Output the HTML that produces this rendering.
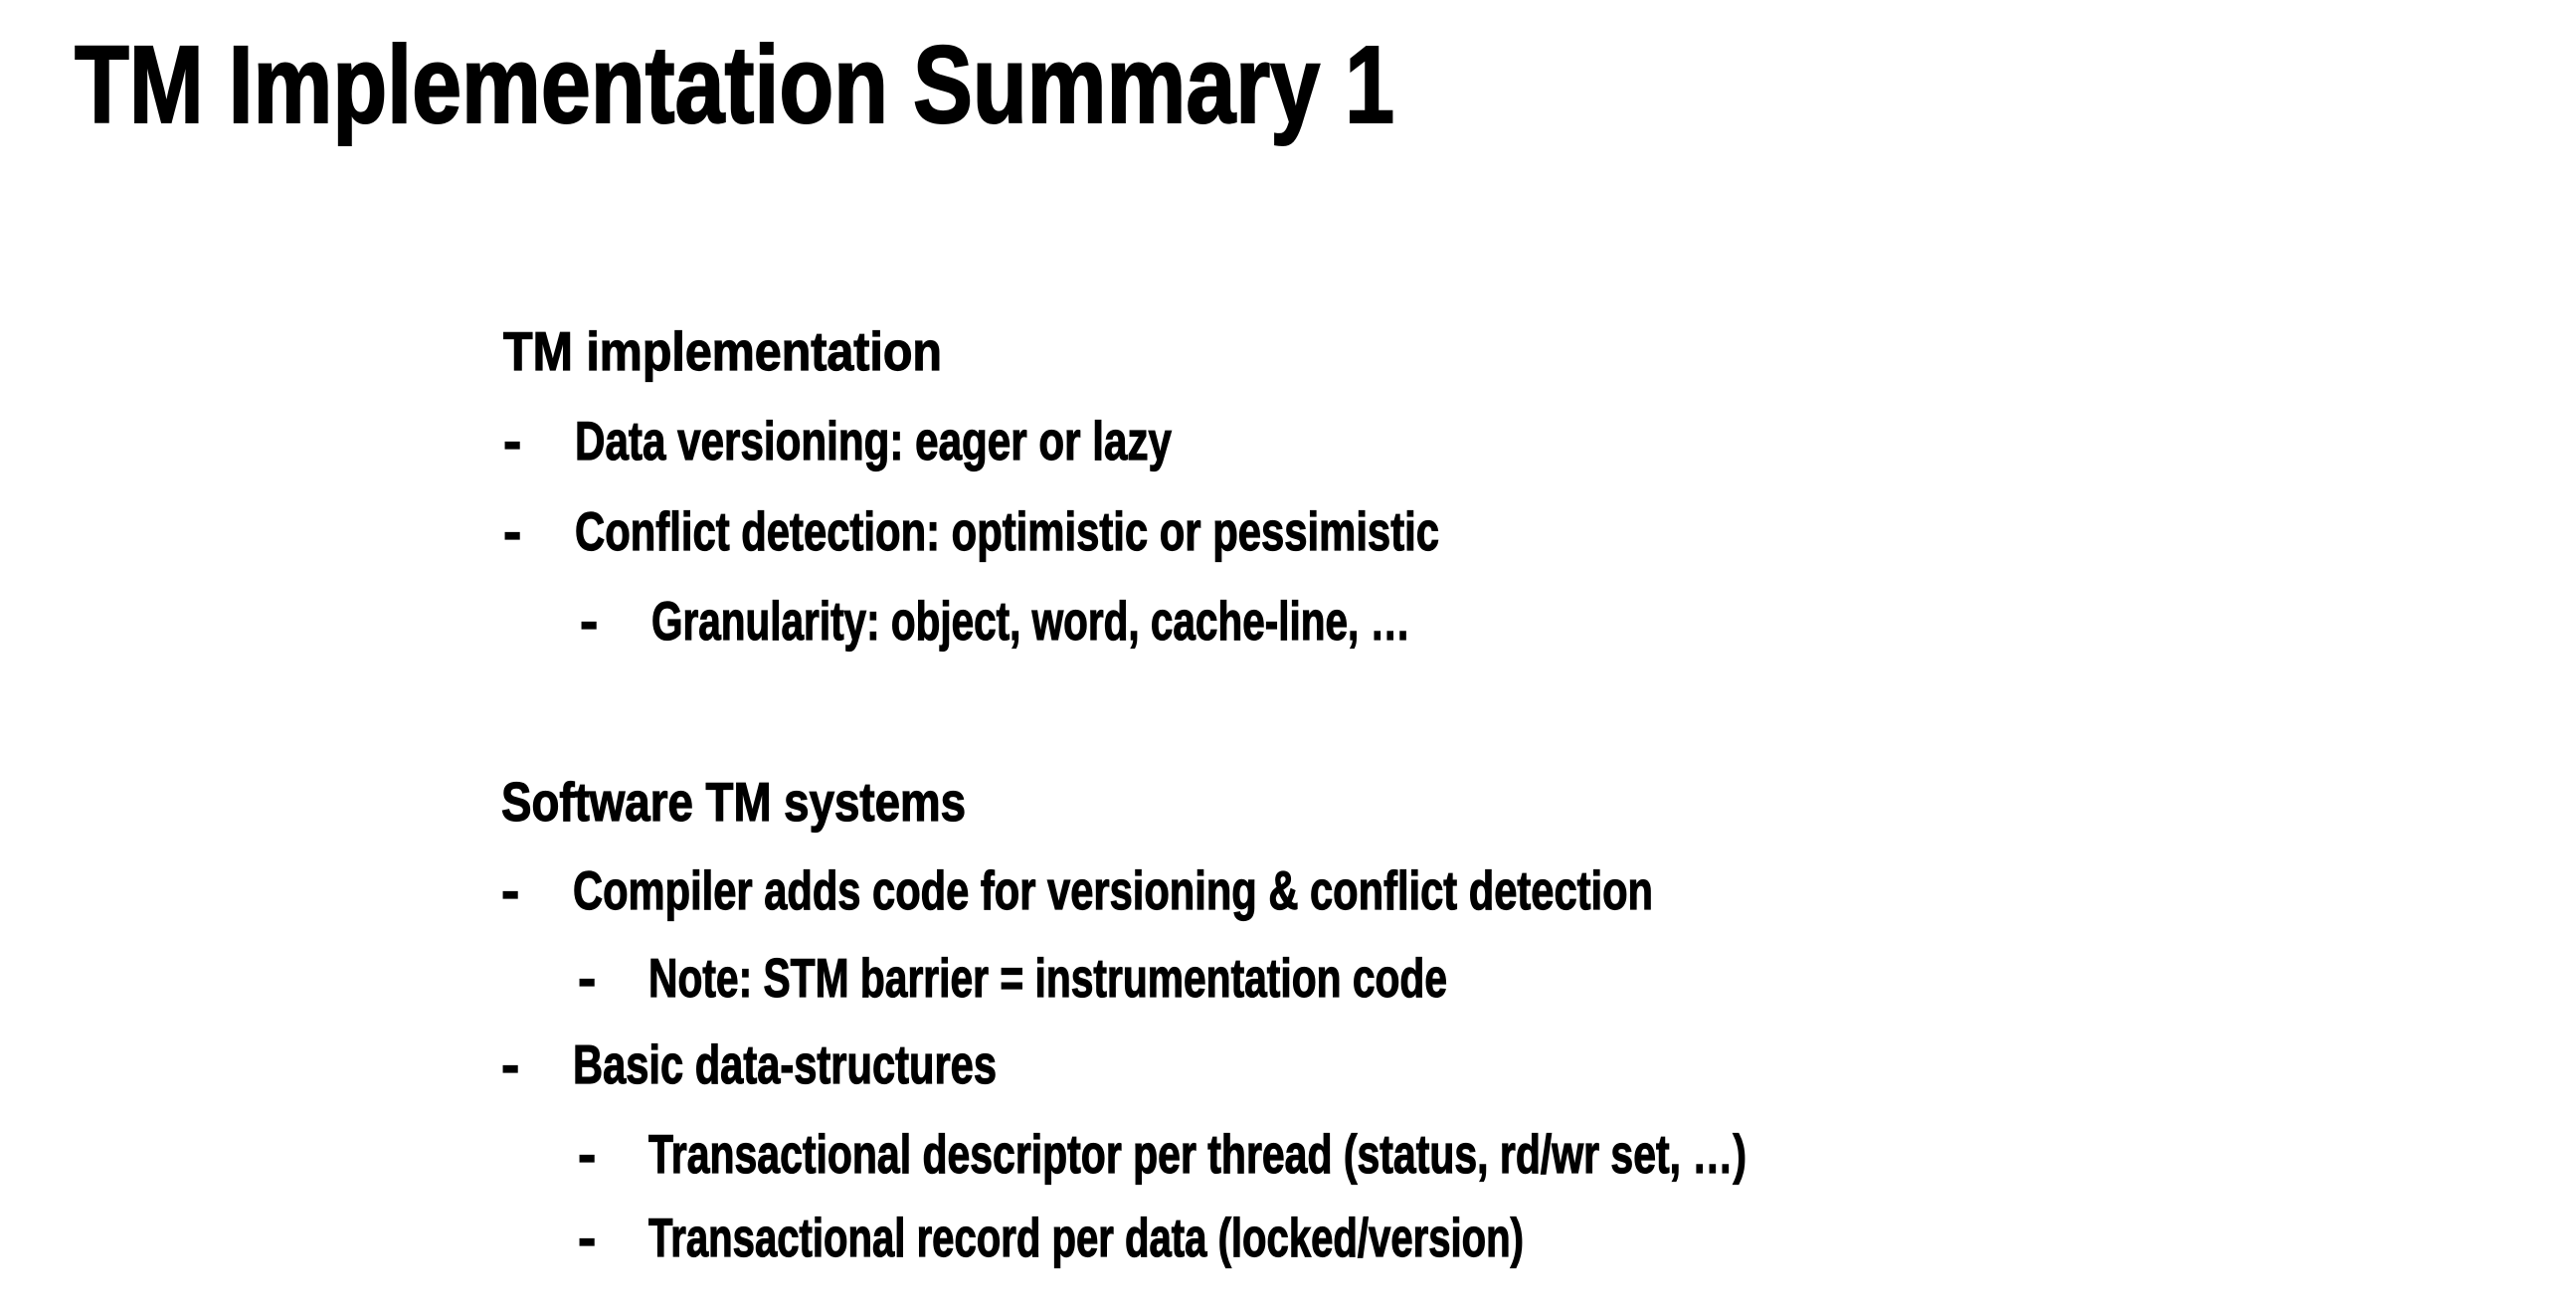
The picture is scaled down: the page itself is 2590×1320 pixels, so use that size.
<!DOCTYPE html>
<html><head><meta charset="utf-8"><style>
html,body{margin:0;padding:0;background:#fff;width:2590px;height:1320px;overflow:hidden}
svg{display:block}
text{font-family:"Liberation Sans Narrow","Liberation Sans",sans-serif;font-weight:bold;fill:#000;stroke:#000;stroke-width:1.2px}
text.t{stroke-width:2px}
</style></head><body>
<svg width="2590" height="1320" viewBox="0 0 2590 1320" xmlns="http://www.w3.org/2000/svg">
<text class="t" x="75" y="123" font-size="110" textLength="1327" lengthAdjust="spacingAndGlyphs">TM Implementation Summary 1</text>

<text x="506" y="372" font-size="55" textLength="441" lengthAdjust="spacingAndGlyphs">TM implementation</text>
<text x="506" y="462" font-size="55">-</text>
<text x="578" y="462" font-size="55" textLength="600" lengthAdjust="spacingAndGlyphs">Data versioning: eager or lazy</text>
<text x="506" y="553" font-size="55">-</text>
<text x="578" y="553" font-size="55" textLength="869" lengthAdjust="spacingAndGlyphs">Conflict detection: optimistic or pessimistic</text>
<text x="583" y="643" font-size="55">-</text>
<text x="655" y="643" font-size="55" textLength="763" lengthAdjust="spacingAndGlyphs">Granularity: object, word, cache-line, …</text>

<text x="504" y="825" font-size="55" textLength="467" lengthAdjust="spacingAndGlyphs">Software TM systems</text>
<text x="504" y="914" font-size="55">-</text>
<text x="576" y="914" font-size="55" textLength="1086" lengthAdjust="spacingAndGlyphs">Compiler adds code for versioning &amp; conflict detection</text>
<text x="581" y="1002" font-size="55">-</text>
<text x="652" y="1002" font-size="55" textLength="803" lengthAdjust="spacingAndGlyphs">Note: STM barrier = instrumentation code</text>
<text x="504" y="1089" font-size="55">-</text>
<text x="576" y="1089" font-size="55" textLength="426" lengthAdjust="spacingAndGlyphs">Basic data-structures</text>
<text x="581" y="1179" font-size="55">-</text>
<text x="652" y="1179" font-size="55" textLength="1104" lengthAdjust="spacingAndGlyphs">Transactional descriptor per thread (status, rd/wr set, …)</text>
<text x="581" y="1263" font-size="55">-</text>
<text x="652" y="1263" font-size="55" textLength="880" lengthAdjust="spacingAndGlyphs">Transactional record per data (locked/version)</text>
</svg>
</body></html>
